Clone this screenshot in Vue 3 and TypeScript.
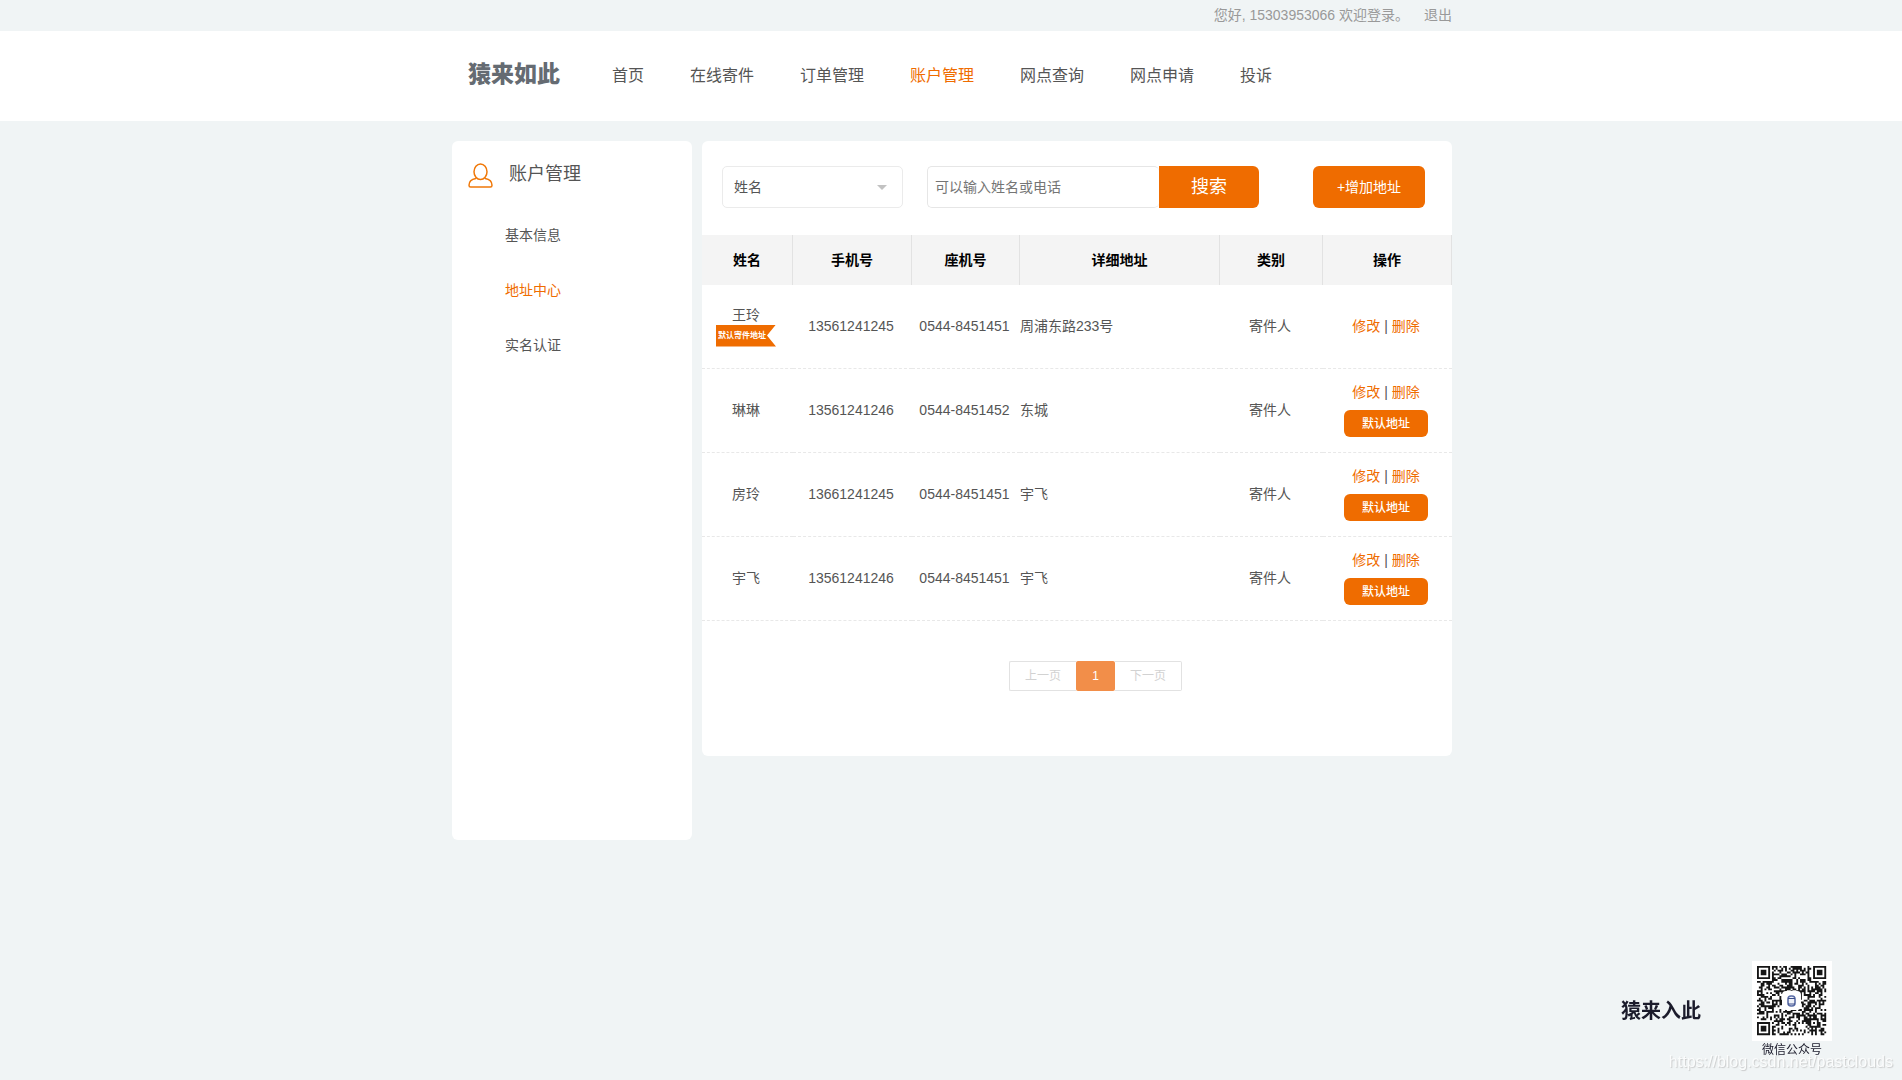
<script setup lang="ts">
import { ref } from 'vue'

interface Address {
  name: string
  mobile: string
  phone: string
  detail: string
  kind: string
  isDefault: boolean
}

const navItems: string[] = ['首页', '在线寄件', '订单管理', '账户管理', '网点查询', '网点申请', '投诉']
const activeNav = ref('账户管理')

const menuItems: string[] = ['基本信息', '地址中心', '实名认证']
const activeMenu = ref('地址中心')

const columns = [
  { title: '姓名', width: 91 },
  { title: '手机号', width: 119 },
  { title: '座机号', width: 108 },
  { title: '详细地址', width: 200 },
  { title: '类别', width: 103 },
  { title: '操作', width: 129 },
]
const totalWidth = columns.reduce((sum, c) => sum + c.width, 0)

const addresses = ref<Address[]>([
  { name: '王玲', mobile: '13561241245', phone: '0544-8451451', detail: '周浦东路233号', kind: '寄件人', isDefault: true },
  { name: '琳琳', mobile: '13561241246', phone: '0544-8451452', detail: '东城', kind: '寄件人', isDefault: false },
  { name: '房玲', mobile: '13661241245', phone: '0544-8451451', detail: '宇飞', kind: '寄件人', isDefault: false },
  { name: '宇飞', mobile: '13561241246', phone: '0544-8451451', detail: '宇飞', kind: '寄件人', isDefault: false },
])

const field = ref('name')
const keyword = ref('')

/* QR code modules: three finders, one alignment mark and a data field */
const QR = 37
function qrPath(): string {
  let seed = 20231
  const next = () => {
    seed = (seed * 1103515245 + 12345) % 2147483648
    return seed / 2147483648
  }
  const ring = (x: number, y: number, cx: number, cy: number) => Math.max(Math.abs(x - cx), Math.abs(y - cy))
  let d = ''
  for (let y = 0; y < QR; y++) {
    for (let x = 0; x < QR; x++) {
      const random = next() < 0.52
      let dark = random
      for (const [cx, cy] of [[3, 3], [QR - 4, 3], [3, QR - 4]]) {
        const r = ring(x, y, cx, cy)
        if (r <= 4) dark = r === 3 || r <= 1
      }
      const a = ring(x, y, QR - 7, QR - 7)
      if (a <= 2) dark = a !== 1
      if (dark) d += `M${x} ${y}h1v1h-1z`
    }
  }
  return d
}
const qr = qrPath()
</script>

<template>
  <div class="page">
    <div class="topbar">
      <div class="wrap topbar-inner">
        <span>您好, 15303953066 欢迎登录。</span>
        <a href="#">退出</a>
      </div>
    </div>

    <header class="header">
      <div class="wrap header-inner">
        <div class="logo">猿来如此</div>
        <nav class="nav">
          <a v-for="item in navItems" :key="item" href="#" :class="{ active: item === activeNav }" @click.prevent="activeNav = item">{{ item }}</a>
        </nav>
      </div>
    </header>

    <div class="wrap content">
      <aside class="sidebar">
        <div class="side-head">
          <svg class="user-icon" viewBox="0 0 25 25" aria-hidden="true">
            <ellipse cx="12.5" cy="8.8" rx="6.5" ry="7.8" />
            <path d="M7.8 15.4C3.4 16.2 1 18.8 1 22.2C1 23.6 1.6 24 2.6 24H22.4C23.4 24 24 23.6 24 22.2C24 18.8 21.6 16.2 17.2 15.4" />
          </svg>
          <h2>账户管理</h2>
        </div>
        <ul class="side-menu">
          <li v-for="item in menuItems" :key="item">
            <a href="#" :class="{ active: item === activeMenu }" @click.prevent="activeMenu = item">{{ item }}</a>
          </li>
        </ul>
      </aside>

      <main class="panel">
        <form class="toolbar" @submit.prevent>
          <div class="select-box">
            <select v-model="field" aria-label="查询字段">
              <option value="name">姓名</option>
              <option value="phone">电话</option>
            </select>
          </div>
          <div class="search">
            <input v-model="keyword" type="text" aria-label="关键字" placeholder="可以输入姓名或电话" />
            <button type="submit">搜索</button>
          </div>
          <button type="button" class="add">+增加地址</button>
        </form>

        <table class="table">
          <colgroup>
            <col v-for="c in columns" :key="c.title" :style="{ width: (c.width / totalWidth) * 100 + '%' }" />
          </colgroup>
          <thead>
            <tr>
              <th v-for="c in columns" :key="c.title">{{ c.title }}</th>
            </tr>
          </thead>
          <tbody>
            <tr v-for="(row, i) in addresses" :key="i">
              <td>
                <div class="name">{{ row.name }}</div>
                <div v-if="row.isDefault" class="ribbon">默认寄件地址</div>
              </td>
              <td>{{ row.mobile }}</td>
              <td>{{ row.phone }}</td>
              <td class="detail">{{ row.detail }}</td>
              <td>{{ row.kind }}</td>
              <td>
                <div class="actions"><a href="#">修改</a> | <a href="#">删除</a></div>
                <button v-if="!row.isDefault" type="button" class="set-default">默认地址</button>
              </td>
            </tr>
          </tbody>
        </table>

        <div class="pager">
          <button type="button" class="prev" disabled>上一页</button>
          <button type="button" class="current">1</button>
          <button type="button" class="next" disabled>下一页</button>
        </div>
      </main>
    </div>

    <div class="wechat">
      <strong>猿来入此</strong>
      <figure>
        <svg class="qr" viewBox="0 0 80 80" role="img" aria-label="微信公众号">
          <rect width="80" height="80" fill="#fff" />
          <path :d="qr" transform="translate(5 5) scale(1.87)" fill="#151515" />
          <rect x="30" y="30" width="19" height="19" rx="4" fill="#fff" />
          <rect x="36" y="35" width="7" height="10" rx="3" fill="#eef1f8" stroke="#5a6ca5" stroke-width="1.6" />
          <path d="M36 37.5h7M36 43h7" stroke="#3d4f8c" stroke-width="1" />
        </svg>
        <figcaption>微信公众号</figcaption>
      </figure>
    </div>
    <div class="watermark">https://blog.csdn.net/pastclouds</div>
  </div>
</template>

<style>
body {
  margin: 0;
  background: #f0f4f5;
}
</style>

<style scoped>
.page {
  font: 14px/20px "Liberation Sans", "Noto Sans CJK SC", sans-serif;
  color: #555;
}
.page * {
  box-sizing: border-box;
}
a {
  color: inherit;
  text-decoration: none;
}
button,
input,
select {
  font: inherit;
  margin: 0;
}
button {
  border: 0;
  padding: 0;
  color: #fff;
  background: #ef6c00;
  cursor: pointer;
}
.wrap {
  max-width: 1002px;
  margin: 0 auto;
  padding-left: 2px;
}

.topbar-inner {
  display: flex;
  justify-content: flex-end;
  gap: 15px;
  line-height: 31px;
  color: #999;
}
.header {
  background: #fff;
}
.header-inner {
  display: flex;
  align-items: center;
  height: 90px;
}
.logo {
  width: 160px;
  padding: 0 0 4px 16px;
  font-size: 23px;
  font-weight: 900;
  line-height: 32px;
  color: #656b72;
}
.nav {
  display: flex;
  gap: 46px;
  font-size: 16px;
}
.active {
  color: #ef6c00;
}

.content {
  display: flex;
  align-items: flex-start;
  gap: 10px;
  padding-top: 20px;
}
.sidebar {
  width: 240px;
  min-height: 699px;
  background: #fff;
  border-radius: 6px;
}
.side-head {
  display: flex;
  align-items: center;
  gap: 16px;
  padding: 18px 16px 0;
}
.side-head h2 {
  margin: 0;
  font-size: 18px;
  font-weight: 400;
  line-height: 28px;
}
.user-icon {
  width: 25px;
  height: 25px;
  margin-top: 4px;
  fill: none;
  stroke: #f07808;
  stroke-width: 1.5;
  stroke-linecap: round;
}
.side-menu {
  list-style: none;
  margin: 20px 0 0;
  padding: 0 0 0 53px;
  line-height: 55px;
}

.panel {
  flex: 1;
  min-width: 0;
  min-height: 615px;
  background: #fff;
  border-radius: 6px;
}
.toolbar {
  display: flex;
  height: 94px;
  padding: 25px 27px 27px 20px;
}
.select-box {
  position: relative;
  width: 181px;
  margin-right: 24px;
}
.select-box::after {
  content: "";
  position: absolute;
  right: 16px;
  top: 19px;
  border: 5px solid transparent;
  border-top-color: #c2c2c2;
  border-bottom: 0;
  pointer-events: none;
}
.select-box select {
  appearance: none;
  width: 100%;
  height: 42px;
  padding: 0 11px;
  color: #555;
  background: #fff;
  border: 1px solid #ebebeb;
  border-radius: 5px;
}
.search {
  display: flex;
}
.search input {
  width: 232px;
  height: 42px;
  padding: 0 7px;
  color: #555;
  background: #fff;
  border: 1px solid #e6e6e6;
  border-right: 0;
  border-radius: 5px;
}
.search input::placeholder {
  color: #757575;
}
.search button {
  width: 100px;
  font-size: 18px;
  border-radius: 0 6px 6px 0;
}
.add {
  width: 112px;
  margin-left: auto;
  border-radius: 6px;
}

.table {
  width: 100%;
  table-layout: fixed;
  border-spacing: 0;
  text-align: center;
}
.table th {
  height: 50px;
  padding: 0;
  color: #000;
  background: #f4f4f4;
  border-right: 1px solid #e2e2e2;
}
.table td {
  height: 84px;
  padding: 0 3px 2px 0;
  border-bottom: 1px dashed #e8e8e8;
}
.table .detail {
  text-align: left;
}
.ribbon {
  width: 60px;
  height: 22px;
  margin: 0 auto;
  padding-left: 2px;
  font-size: 8px;
  font-weight: 700;
  line-height: 21px;
  text-align: left;
  white-space: nowrap;
  color: #fff;
  background: #ef6c00;
  clip-path: polygon(0 0, 100% 0, 51px 50%, 100% 100%, 0 100%);
}
.actions a {
  color: #ef6c00;
}
.set-default {
  width: 84px;
  height: 27px;
  margin-top: 8px;
  font-size: 12px;
  font-weight: 500;
  border-radius: 6px;
}

.pager {
  display: flex;
  justify-content: center;
  padding: 40px 0 40px 37px;
  font-size: 12px;
}
.pager button {
  height: 30px;
  background: #fff;
}
.pager .prev,
.pager .next {
  width: 67px;
  color: #d2d2d2;
  border: 1px solid #e2e2e2;
}
.pager .prev {
  border-right: 0;
  border-radius: 2px 0 0 2px;
}
.pager .next {
  border-left: 0;
  border-radius: 0 2px 2px 0;
}
.pager .current {
  width: 39px;
  background: #f28e49;
  border-radius: 2px;
}

.wechat {
  position: fixed;
  right: 70px;
  bottom: 20px;
  display: flex;
  align-items: center;
  gap: 51px;
  color: #1b1b2b;
}
.wechat strong {
  font-size: 20px;
  line-height: 28px;
}
.wechat figure {
  margin: 0;
  font-size: 12px;
  line-height: 19px;
  text-align: center;
}
.qr {
  display: block;
  width: 80px;
  height: 80px;
}
.watermark {
  position: fixed;
  right: 9px;
  bottom: 8px;
  font-size: 16px;
  color: #fff;
  opacity: 0.7;
  text-shadow: 1px 1px 1px #bbb;
}
</style>
